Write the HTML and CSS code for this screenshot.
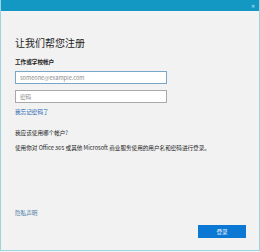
FILE: index.html
```html
<html>
  <head>
    <link rel="stylesheet" href="styles.css">
  </head>
  <body>
    <div class="window">
      <div class="titlebar">
        <span class="titlebar__close">✕</span>
      </div>
      <div class="content">
        <h1 class="heading">让我们帮您注册</h1>
        <div class="field-label">工作或学校帐户</div>
        <input class="field" type="text" placeholder="someone@example.com">
        <input class="field field--second" type="password" placeholder="密码">
        <a class="link" href="#">我忘记密码了</a>
        <div class="question">我应该使用哪个帐户?</div>
        <div class="note">使用你对 Office 365 或其他 Microsoft 商业服务使用的用户名和密码进行登录。</div>
        <div class="footer">
          <a class="privacy" href="#">隐私声明</a>
          <div class="actions">
            <button class="signin">登录</button>
          </div>
        </div>
      </div>
    </div>
  </body>
</html>
```

FILE: styles.css
```css
body {
	margin: 0;
	background: #f2f2f2;
	font-family: "Noto Sans CJK SC", "Noto Sans", sans-serif;
	color: #1a1a1a;
}

.window {
	width: 258px;
	height: 250px;
	display: flex;
	flex-direction: column;
	border: 1px solid #9fd3df;
	border-top: 0;
	background: #f2f2f2;
}

.titlebar {
	height: 11px;
	background: #1298c3;
	display: flex;
	justify-content: flex-end;
	align-items: center;
	padding-right: 4px;
}

.titlebar__close {
	color: #cfeef6;
	font-size: 5px;
	line-height: 1;
}

.content {
	flex: 1;
	display: flex;
	flex-direction: column;
	padding: 26px 13px 12px 14px;
}

.heading {
	margin: 0;
	font-size: 10px;
	line-height: 12px;
	font-weight: 400;
	color: #222;
}

.field-label {
	margin-top: 10px;
	font-size: 5.6px;
	line-height: 7px;
	font-weight: 700;
	color: #222;
}

.field {
	width: 152px;
	height: 13px;
	margin-top: 5px;
	padding: 0 4px;
	border: 1px solid #a9a9a9;
	background: #fff;
	font-family: inherit;
	font-size: 5.6px;
	outline: none;
}

.field:first-of-type {
	border-color: #7aa7c7;
}

.field::placeholder {
	color: #8a8a8a;
}

.field--second {
	margin-top: 6px;
}

.link {
	margin-top: 6px;
	font-size: 5.6px;
	line-height: 7px;
	color: #2266b0;
	text-decoration: none;
}

.question {
	margin-top: 14px;
	font-size: 5.6px;
	line-height: 7px;
	color: #222;
}

.note {
	margin-top: 8px;
	font-size: 5.6px;
	line-height: 7px;
	color: #222;
}

.footer {
	margin-top: auto;
	display: flex;
	flex-direction: column;
}

.privacy {
	font-size: 5.6px;
	line-height: 7px;
	color: #4a7aa6;
	text-decoration: none;
}

.actions {
	margin-top: 8px;
	display: flex;
	justify-content: flex-end;
}

.signin {
	width: 48px;
	height: 13px;
	border: 0;
	background: #0b78d4;
	color: #fff;
	font-family: inherit;
	font-size: 5.6px;
	padding: 0;
}
```
